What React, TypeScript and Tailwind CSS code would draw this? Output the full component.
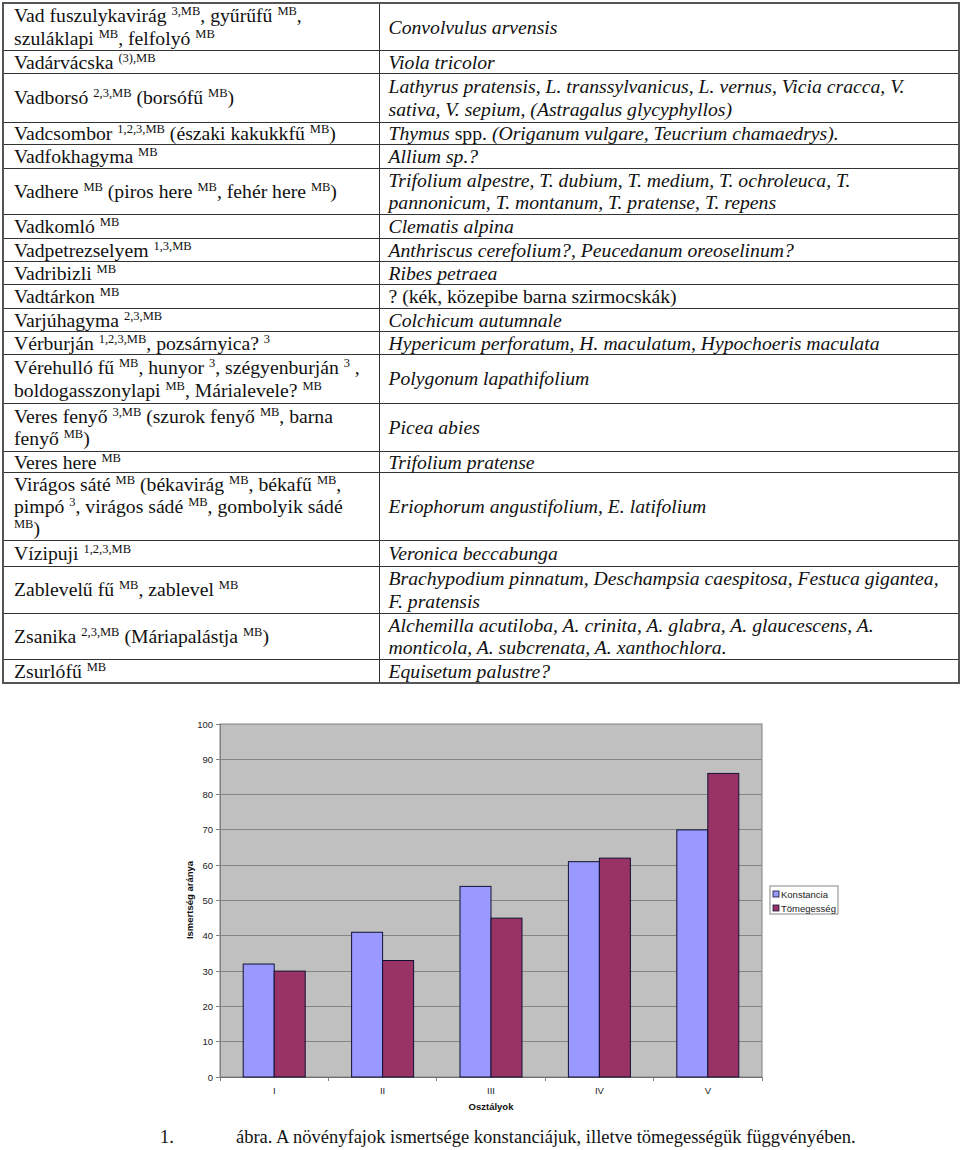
import React from "react";

const S = ({ c }: { c: string }) => (
  <sup className="text-[12.5px] -top-[7px]">{c}</sup>
);

type Row = { h: number; lh: string; left: React.ReactNode; right: React.ReactNode };

const I = ({ children }: { children: React.ReactNode }) => <i>{children}</i>;

const ONE = "leading-[20px]";
const TWO = "leading-[22.5px]";
const THREE = "leading-[22px]";

const rows: Row[] = [
  {
    h: 47,
    lh: TWO,
    left: (
      <>
        Vad fuszulykavirág <S c="3,MB" />, gyűrűfű <S c="MB" />,
        <br />
        szuláklapi <S c="MB" />, felfolyó <S c="MB" />
      </>
    ),
    right: <I>Convolvulus arvensis</I>,
  },
  { h: 23, lh: ONE, left: <>Vadárvácska <S c="(3),MB" /></>, right: <I>Viola tricolor</I> },
  {
    h: 49,
    lh: TWO,
    left: <>Vadborsó <S c="2,3,MB" /> (borsófű <S c="MB" />)</>,
    right: (
      <I>
        Lathyrus pratensis, L. transsylvanicus, L. vernus, Vicia cracca, V.
        <br />
        sativa, V. sepium, (Astragalus glycyphyllos)
      </I>
    ),
  },
  {
    h: 22,
    lh: ONE,
    left: <>Vadcsombor <S c="1,2,3,MB" /> (északi kakukkfű <S c="MB" />)</>,
    right: (
      <>
        <I>Thymus</I> spp. <I>(Origanum vulgare, Teucrium chamaedrys).</I>
      </>
    ),
  },
  { h: 24, lh: ONE, left: <>Vadfokhagyma <S c="MB" /></>, right: <I>Allium sp.?</I> },
  {
    h: 46,
    lh: TWO,
    left: <>Vadhere <S c="MB" /> (piros here <S c="MB" />, fehér here <S c="MB" />)</>,
    right: (
      <I>
        Trifolium alpestre, T. dubium, T. medium, T. ochroleuca, T.
        <br />
        pannonicum, T. montanum, T. pratense, T. repens
      </I>
    ),
  },
  { h: 24, lh: ONE, left: <>Vadkomló <S c="MB" /></>, right: <I>Clematis alpina</I> },
  {
    h: 23,
    lh: ONE,
    left: <>Vadpetrezselyem <S c="1,3,MB" /></>,
    right: <I>Anthriscus cerefolium?, Peucedanum oreoselinum?</I>,
  },
  { h: 23, lh: ONE, left: <>Vadribizli <S c="MB" /></>, right: <I>Ribes petraea</I> },
  { h: 24, lh: ONE, left: <>Vadtárkon <S c="MB" /></>, right: <>? (kék, közepibe barna szirmocskák)</> },
  { h: 23, lh: ONE, left: <>Varjúhagyma <S c="2,3,MB" /></>, right: <I>Colchicum autumnale</I> },
  {
    h: 23,
    lh: ONE,
    left: <>Vérburján <S c="1,2,3,MB" />, pozsárnyica? <S c="3" /></>,
    right: <I>Hypericum perforatum, H. maculatum, Hypochoeris maculata</I>,
  },
  {
    h: 49,
    lh: TWO,
    left: (
      <>
        Vérehulló fű <S c="MB" />, hunyor <S c="3" />, szégyenburján <S c="3" /> ,
        <br />
        boldogasszonylapi <S c="MB" />, Márialevele? <S c="MB" />
      </>
    ),
    right: <I>Polygonum lapathifolium</I>,
  },
  {
    h: 48,
    lh: TWO,
    left: (
      <>
        Veres fenyő <S c="3,MB" /> (szurok fenyő <S c="MB" />, barna
        <br />
        fenyő <S c="MB" />)
      </>
    ),
    right: <I>Picea abies</I>,
  },
  { h: 21, lh: ONE, left: <>Veres here <S c="MB" /></>, right: <I>Trifolium pratense</I> },
  {
    h: 68,
    lh: THREE,
    left: (
      <>
        Virágos sáté <S c="MB" /> (békavirág <S c="MB" />, békafű <S c="MB" />,
        <br />
        pimpó <S c="3" />, virágos sádé <S c="MB" />, gombolyik sádé
        <br />
        <S c="MB" />)
      </>
    ),
    right: <I>Eriophorum angustifolium, E. latifolium</I>,
  },
  { h: 26, lh: ONE, left: <>Vízipuji <S c="1,2,3,MB" /></>, right: <I>Veronica beccabunga</I> },
  {
    h: 47,
    lh: TWO,
    left: <>Zablevelű fű <S c="MB" />, zablevel <S c="MB" /></>,
    right: (
      <I>
        Brachypodium pinnatum, Deschampsia caespitosa, Festuca gigantea,
        <br />
        F. pratensis
      </I>
    ),
  },
  {
    h: 46,
    lh: TWO,
    left: <>Zsanika <S c="2,3,MB" /> (Máriapalástja <S c="MB" />)</>,
    right: (
      <I>
        Alchemilla acutiloba, A. crinita, A. glabra, A. glaucescens, A.
        <br />
        monticola, A. subcrenata, A. xanthochlora.
      </I>
    ),
  },
  { h: 24, lh: ONE, left: <>Zsurlófű <S c="MB" /></>, right: <I>Equisetum palustre?</I> },
];

const cats = ["I", "II", "III", "IV", "V"];
const blue = [32, 41, 54, 61, 70];
const red = [30, 33, 45, 62, 86];
const PL = 220;
const PR = 762;
const PT = 24;
const PB = 377;
const CW = (PR - PL) / 5;
const Y = (v: number) => PB - v * 3.53;
const sans = "'Liberation Sans', Arial, sans-serif";

function Chart() {
  const grid = [10, 20, 30, 40, 50, 60, 70, 80, 90];
  const ticks = [0, 10, 20, 30, 40, 50, 60, 70, 80, 90, 100];
  return (
    <svg width={960} height={420} viewBox="0 0 960 420" className="block">
      <rect x={PL} y={PT} width={PR - PL} height={PB - PT} fill="#C0C0C0" stroke="#808080" strokeWidth={1} />
      {grid.map((v) => (
        <line key={v} x1={PL} x2={PR} y1={Y(v)} y2={Y(v)} stroke="#858585" strokeWidth={1} shapeRendering="crispEdges" />
      ))}
      {ticks.map((v) => (
        <g key={v}>
          <line x1={PL - 4} x2={PL} y1={Y(v)} y2={Y(v)} stroke="#808080" strokeWidth={1} shapeRendering="crispEdges" />
          <text x={213} y={Y(v) + 3.5} textAnchor="end" fontSize={9.5} fontFamily={sans} fill="#222">
            {v}
          </text>
        </g>
      ))}
      <line x1={PL} x2={PL} y1={PT} y2={PB} stroke="#808080" strokeWidth={1} shapeRendering="crispEdges" />
      <line x1={PL} x2={PR} y1={PB} y2={PB} stroke="#707070" strokeWidth={1} shapeRendering="crispEdges" />
      {[0, 1, 2, 3, 4, 5].map((k) => (
        <line key={k} x1={PL + CW * k} x2={PL + CW * k} y1={PB} y2={PB + 4} stroke="#808080" strokeWidth={1} shapeRendering="crispEdges" />
      ))}
      {cats.map((c, i) => {
        const cx = PL + CW * i + CW / 2;
        return (
          <g key={c}>
            <rect x={cx - 31} y={Y(blue[i])} width={31} height={PB - Y(blue[i])} fill="#9999FF" stroke="#111133" strokeWidth={1} />
            <rect x={cx} y={Y(red[i])} width={31} height={PB - Y(red[i])} fill="#993366" stroke="#111133" strokeWidth={1} />
            <text x={cx} y={394} textAnchor="middle" fontSize={9.5} fontFamily={sans} fill="#222">
              {c}
            </text>
          </g>
        );
      })}
      <text x={491} y={410} textAnchor="middle" fontSize={9.5} fontWeight="bold" fontFamily={sans} fill="#111">
        Osztályok
      </text>
      <text x={193} y={200} textAnchor="middle" fontSize={9.5} fontWeight="bold" fontFamily={sans} fill="#111" transform="rotate(-90 193 200)">
        Ismertség aránya
      </text>
      <rect x={770} y={186} width={68} height={28} fill="#fff" stroke="#888" strokeWidth={1} />
      <rect x={773} y={191} width={6} height={6} fill="#9999FF" stroke="#111133" strokeWidth={0.8} />
      <rect x={773} y={205} width={6} height={6} fill="#993366" stroke="#111133" strokeWidth={0.8} />
      <text x={781} y={197.5} fontSize={9.5} fontFamily={sans} fill="#222">
        Konstancia
      </text>
      <text x={781} y={211.5} fontSize={9.5} fontFamily={sans} fill="#222">
        Tömegesség
      </text>
    </svg>
  );
}

export default function App() {
  return (
    <div className="w-[960px] h-[1150px] bg-white text-[#111] font-[family-name:'Liberation_Serif','Times_New_Roman',serif] overflow-hidden">
      <div className="pt-[2px] pl-[2px]">
        <table className="border-collapse w-[956px] table-fixed border-2 border-[#555] text-[19.7px] font-[family-name:'Liberation_Serif','Times_New_Roman',serif]">
          <colgroup>
            <col className="w-[376px]" />
            <col className="w-[580px]" />
          </colgroup>
          <tbody>
            {rows.map((r, i) => (
              <tr key={i}>
                <td className={`border border-[#333] px-[10px] py-0 align-middle ${r.lh}`} style={{ height: r.h }}>
                  {r.left}
                </td>
                <td className={`border border-[#333] px-[9px] py-0 align-middle ${r.lh}`} style={{ height: r.h }}>
                  {r.right}
                </td>
              </tr>
            ))}
          </tbody>
        </table>
      </div>
      <div className="mt-[16px]">
        <Chart />
      </div>
      <p className="flex pl-[160px] mt-[6px] text-[18.5px] leading-[23px]">
        <span className="w-[76px]">1.</span>
        <span>ábra. A növényfajok ismertsége konstanciájuk, illetve tömegességük függvényében.</span>
      </p>
    </div>
  );
}
